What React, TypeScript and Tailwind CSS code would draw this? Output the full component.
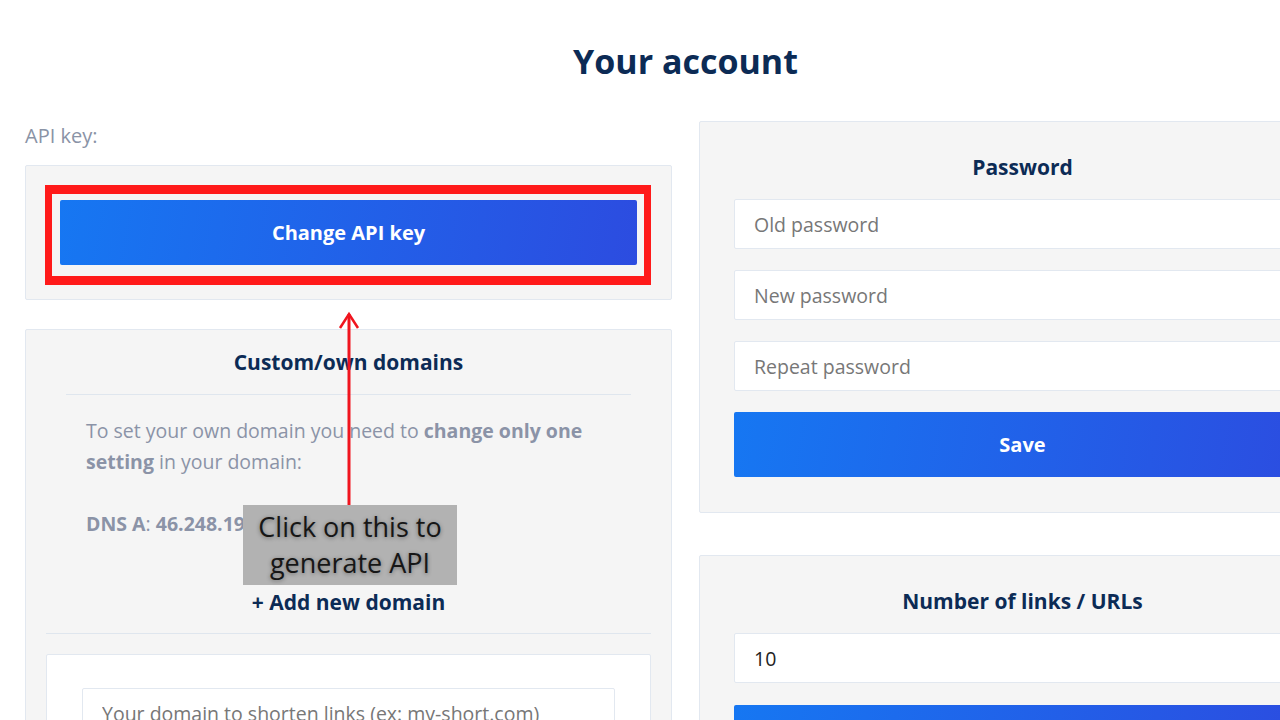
import React from "react";

const font = { fontFamily: "'Open Sans', 'Noto Sans', sans-serif" };

const boxClass = "rounded-[2px] border border-[#e2e8f0] bg-[#f5f5f5]";
const inputClass =
  "block h-[50px] w-full rounded-[2px] border border-[#e2e8f0] bg-white px-[19px] text-[19.5px] text-[#222] outline-none placeholder:text-[#777]";
const buttonClass =
  "flex h-[65px] w-full items-center justify-center rounded-[2px] bg-[linear-gradient(100deg,#1677f2,#2c4ce0)] text-[20px] font-bold text-white";

function Title({ children }: { children: React.ReactNode }) {
  return <h2 className="text-center text-[21px] font-bold leading-[28px] text-[#0c2b55]">{children}</h2>;
}

export default function App() {
  return (
    <div className="relative h-[720px] w-full overflow-hidden bg-white" style={font}>
      <div className="ml-[25px] w-[1321px]">
        <div className="h-[121px] pt-[40px]">
          <h1 className="text-center text-[34px] font-bold leading-[42px] text-[#0c2b55]">Your account</h1>
        </div>

        <div className="grid grid-cols-2 gap-[27px]">
          {/* left column */}
          <div>
            <div className="mb-[14px] text-[20px] leading-[30px] text-[#8a93a6]">API key:</div>
            <div className={`${boxClass} p-[34px]`}>
              <div className="relative">
                <button className={buttonClass}>Change API key</button>
                <div className="pointer-events-none absolute -bottom-[20px] -left-[15px] -right-[14px] -top-[15px] border-x-[7px] border-y-[9px] border-[#ff1a1a]" />
              </div>
            </div>

            <div className={`${boxClass} mt-[29px] px-[20px] pt-[18px] pb-[40px]`}>
              <Title>Custom/own domains</Title>
              <div className="mx-[20px] mt-[18px] border-t border-[#dfe6ee]" />
              <div className="px-[40px] pt-[20px] text-[19.5px] leading-[31px] text-[#8b93a7]">
                <p>
                  To set your own domain you need to <b>change only one setting</b> in your domain:
                </p>
                <p className="mt-[31px]">
                  <b>DNS A</b>: <b>46.248.190.217</b>
                </p>
              </div>
              <div className="mt-[49px] text-center text-[21px] font-bold leading-[28px] text-[#0c2b55]">+ Add new domain</div>
              <div className="mt-[17px] border-t border-[#dfe6ee]" />
              <div className="mt-[20px] rounded-[2px] border border-[#e2e8f0] bg-white px-[35px] pt-[33px] pb-[33px]">
                <input className={inputClass} placeholder="Your domain to shorten links (ex: my-short.com)" />
              </div>
            </div>
          </div>

          {/* right column */}
          <div>
            <div className={`${boxClass} px-[34px] pt-[31px] pb-[35px]`}>
              <Title>Password</Title>
              <div className="mt-[18px] flex flex-col gap-[21px]">
                <input className={inputClass} placeholder="Old password" type="password" />
                <input className={inputClass} placeholder="New password" type="password" />
                <input className={inputClass} placeholder="Repeat password" type="password" />
                <button className={buttonClass}>Save</button>
              </div>
            </div>

            <div className={`${boxClass} mt-[42px] px-[34px] pt-[31px] pb-[35px]`}>
              <Title>Number of links / URLs</Title>
              <div className="mt-[18px] flex flex-col gap-[22px]">
                <input className={inputClass} defaultValue="10" />
                <button className={buttonClass}>Save</button>
              </div>
            </div>
          </div>
        </div>
      </div>

      {/* annotation: arrow + caption */}
      <svg className="pointer-events-none absolute left-[335px] top-[308px]" width="30" height="206" viewBox="0 0 30 206">
        <path d="M14 6 V204" stroke="#f0141e" strokeWidth="3" fill="none" />
        <path d="M5 20 L14 6 L23 20" stroke="#f0141e" strokeWidth="2.5" fill="none" strokeLinejoin="miter" />
      </svg>
      <div
        className="pointer-events-none absolute left-[243px] top-[505px] flex h-[80px] w-[214px] flex-col items-center justify-center bg-[#b2b2b2] text-center text-[27px] leading-[36px] text-[#161616] [text-shadow:0_1px_4px_rgba(0,0,0,0.4)]"
        style={{ fontFamily: "'Open Sans', 'Noto Sans', sans-serif" }}
      >
        <span>Click on this to</span>
        <span>generate API</span>
      </div>
    </div>
  );
}
